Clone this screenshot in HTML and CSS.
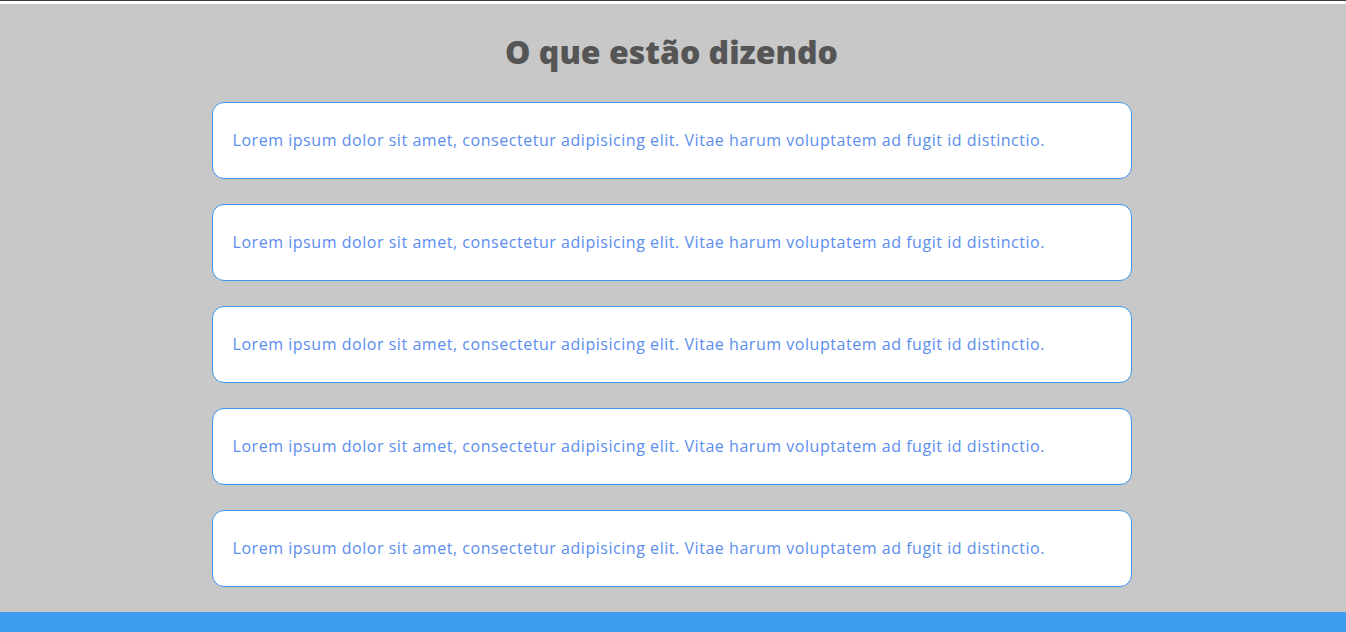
FILE: index.html
```html
<!DOCTYPE html>
<html lang="pt-BR">
<head>
<meta charset="utf-8">
<title>Depoimentos</title>
<link rel="stylesheet" href="styles.css">
</head>
<body>
<div class="topbar"></div>
<section class="testimonials">
  <h2 class="title">O que estão dizendo</h2>
  <div class="list">
    <div class="card"><p>Lorem ipsum dolor sit amet, consectetur adipisicing elit. Vitae harum voluptatem ad fugit id distinctio.</p></div>
    <div class="card"><p>Lorem ipsum dolor sit amet, consectetur adipisicing elit. Vitae harum voluptatem ad fugit id distinctio.</p></div>
    <div class="card"><p>Lorem ipsum dolor sit amet, consectetur adipisicing elit. Vitae harum voluptatem ad fugit id distinctio.</p></div>
    <div class="card"><p>Lorem ipsum dolor sit amet, consectetur adipisicing elit. Vitae harum voluptatem ad fugit id distinctio.</p></div>
    <div class="card"><p>Lorem ipsum dolor sit amet, consectetur adipisicing elit. Vitae harum voluptatem ad fugit id distinctio.</p></div>
  </div>
</section>
<footer class="footer"></footer>
</body>
</html>
```
FILE: styles.css
```css
* { box-sizing: border-box; }
html, body { margin: 0; padding: 0; }
body {
  background: #c8c8c8;
  font-family: "Open Sans", "DejaVu Sans", sans-serif;
}
.topbar {
  height: 4px;
  background: #ffffff;
  border-top: 1px solid #3a3a3a;
}
.testimonials {
  padding: 24px 3px 25px 0;
  display: flex;
  flex-direction: column;
  align-items: center;
}
.title {
  margin: 0 0 26px;
  font-size: 32px;
  line-height: 48px;
  font-weight: 800;
  color: #555555;
  text-align: center;
}
.list {
  width: 920px;
  display: flex;
  flex-direction: column;
  gap: 25px;
}
.card {
  background: #ffffff;
  border: 1px solid #3d95ee;
  border-radius: 12px;
  height: 77px;
  padding: 0 20px 2px;
  display: flex;
  align-items: center;
}
.card p {
  margin: 0;
  font-size: 16px;
  line-height: 24px;
  letter-spacing: 0.54px;
  color: #5b8def;
}
.footer {
  height: 20px;
  background: #3d9bf0;
}
```
